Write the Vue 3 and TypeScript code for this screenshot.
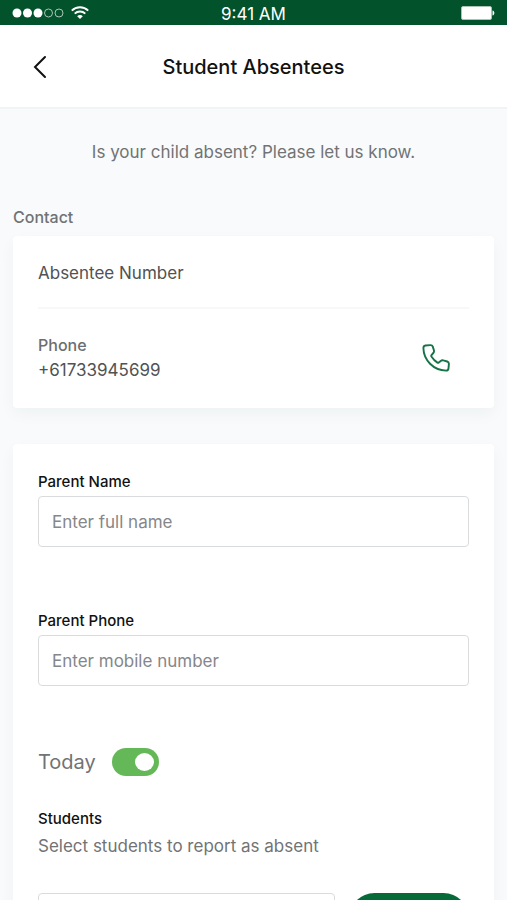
<script setup lang="ts">
import { ref } from 'vue'

const parentName = ref('')
const parentPhone = ref('')
const student = ref('')
const today = ref(true)
const signal: boolean[] = [true, true, true, false, false]
</script>

<template>
  <div class="screen">
    <div class="status">
      <div class="status-left">
        <svg class="signal" viewBox="0 0 52 10" aria-hidden="true">
          <circle
            v-for="(on, i) in signal"
            :key="i"
            :cx="5 + i * 10.5"
            cy="5"
            :r="on ? 4.5 : 4"
            :fill="on ? '#fff' : 'none'"
            :stroke="on ? 'none' : '#a9c4b4'"
          />
        </svg>
        <svg class="wifi" viewBox="0 0 18 13" fill="none" stroke="#fff" stroke-width="2" aria-hidden="true">
          <path d="M0.8 4.6C5.4 0.1 12.6 0.1 17.2 4.6" />
          <path d="M3.7 7.6C6.7 4.7 11.3 4.7 14.3 7.6" />
          <path d="M9 13L6.2 10.2C7.8 8.7 10.2 8.7 11.8 10.2Z" fill="#fff" stroke="none" />
        </svg>
      </div>
      <time class="clock">9:41 AM</time>
      <div class="status-right">
        <svg class="battery" viewBox="0 0 34 14" aria-hidden="true">
          <rect x="0.5" y="0.5" width="30" height="13" rx="1.5" fill="#fff" stroke="#a9c4b4" />
          <path d="M31.5 4.5C34 5 34 9 31.5 9.5Z" fill="#fff" />
        </svg>
      </div>
    </div>

    <header class="header">
      <button class="back" type="button" aria-label="Back">
        <svg viewBox="0 0 14 24" fill="none" stroke="#111" stroke-width="2" stroke-linecap="round" aria-hidden="true">
          <path d="M12 2L2 12L12 22" />
        </svg>
      </button>
      <h1>Student Absentees</h1>
    </header>

    <main class="content">
      <p class="intro">Is your child absent? Please let us know.</p>

      <h2 class="section">Contact</h2>
      <section class="card">
        <p class="contact-name">Absentee Number</p>
        <div class="contact-row">
          <div>
            <p class="contact-label">Phone</p>
            <p class="contact-value">+61733945699</p>
          </div>
          <a class="call" href="tel:+61733945699" aria-label="Call +61733945699">
            <svg viewBox="0 0 28 28" fill="none" stroke="#157347" stroke-width="1.9" stroke-linejoin="round" aria-hidden="true">
              <path d="M3.4 1.5L8.4 1.1C9.6 1 10.4 1.6 10.8 2.6L11.9 6.2C12.2 7.3 12 8.2 11.3 9L9.5 11.1C9.1 11.6 9.1 12 9.4 12.5C11 15 13 17 15.4 18.6C15.9 18.9 16.4 18.9 16.8 18.5L18.7 16.9C19.5 16.3 20.5 16.1 21.4 16.4L25.2 17.5C26.3 17.9 26.9 18.7 26.9 19.8L26.5 24.3C26.4 25.7 25.4 26.6 24 26.6C11.4 26.2 1.6 16.2 1.4 4.1C1.4 2.8 2.2 1.7 3.4 1.5Z" />
            </svg>
          </a>
        </div>
      </section>

      <form class="card form" @submit.prevent>
        <div class="field">
          <label for="parent-name">Parent Name</label>
          <input id="parent-name" v-model="parentName" type="text" placeholder="Enter full name" />
        </div>
        <div class="field">
          <label for="parent-phone">Parent Phone</label>
          <input id="parent-phone" v-model="parentPhone" type="tel" placeholder="Enter mobile number" />
        </div>
        <div class="today">
          <label for="today">Today</label>
          <input id="today" v-model="today" class="switch" type="checkbox" role="switch" />
        </div>
        <div class="students">
          <label for="student">Students</label>
          <p>Select students to report as absent</p>
          <div class="add-row">
            <input id="student" v-model="student" type="text" />
            <button class="add" type="button" aria-label="Add student"></button>
          </div>
        </div>
      </form>
    </main>
  </div>
</template>

<style>
body {
  margin: 0;
}
</style>

<style scoped>
.screen {
  display: flex;
  flex-direction: column;
  height: 100vh;
  background: #f8fafb;
  color: #111;
  font-family: Inter, "Liberation Sans", sans-serif;
}
.screen * {
  box-sizing: border-box;
}
h1, h2, p {
  margin: 0;
}
.status {
  flex: none;
  display: grid;
  grid-template-columns: 1fr auto 1fr;
  align-items: center;
  height: 25px;
  padding: 0 12px;
  background: #02522b;
  color: #fff;
}
.status-left {
  display: flex;
  align-items: center;
  gap: 7px;
}
.status svg {
  display: block;
}
.signal {
  width: 52px;
  height: 10px;
}
.wifi {
  width: 18px;
  height: 13px;
}
.clock {
  padding-top: 3px;
  font-size: 17px;
  line-height: 22px;
}
.status-right {
  display: flex;
  justify-content: flex-end;
}
.battery {
  width: 34px;
  height: 14px;
}
.header {
  flex: none;
  display: grid;
  grid-template-columns: 56px 1fr 56px;
  align-items: center;
  height: 84px;
  padding: 2px 12px 0;
  background: #fff;
  border-bottom: 2px solid #f1f4f5;
}
.back {
  display: flex;
  justify-content: center;
  padding: 8px 0;
  border: 0;
  background: none;
}
.back svg {
  width: 14px;
  height: 24px;
}
h1 {
  font-size: 20px;
  font-weight: 500;
  line-height: 28px;
  text-align: center;
}
.content {
  flex: 1;
  min-height: 0;
  padding: 31px 13px;
  overflow-y: auto;
  scrollbar-width: none;
}
.intro {
  color: #717375;
  font-size: 17px;
  line-height: 25px;
  text-align: center;
}
.section {
  margin: 40px 0 7px;
  color: #707274;
  font-size: 16px;
  font-weight: 500;
  line-height: 24px;
}
.card {
  padding: 0 25px;
  border-radius: 4px;
  background: #fff;
  box-shadow: 0 6px 16px rgba(30, 60, 50, 0.04);
}
.contact-name {
  padding: 25px 0 22px;
  border-bottom: 2px solid #f7f8f9;
  color: #505254;
  font-size: 17px;
  line-height: 24px;
}
.contact-row {
  display: flex;
  align-items: center;
  justify-content: space-between;
  padding: 24px 19px 25px 0;
}
.contact-label {
  color: #6c6e70;
  font-size: 16px;
  font-weight: 500;
  line-height: 25px;
}
.contact-value {
  color: #505254;
  font-size: 17px;
  line-height: 25px;
}
.call svg {
  display: block;
  width: 28px;
  height: 28px;
}
.form {
  margin-top: 36px;
  padding-top: 28px;
  padding-bottom: 28px;
}
.field {
  display: flex;
  flex-direction: column;
  gap: 4px;
  margin-bottom: 64px;
}
.field label,
.students label {
  display: block;
  font-size: 15px;
  font-weight: 500;
  line-height: 20px;
}
input[type="text"],
input[type="tel"] {
  width: 100%;
  min-width: 0;
  height: 51px;
  padding: 0 13px;
  border: 1px solid #d9dbdd;
  border-radius: 4px;
  background: #fff;
  color: #505254;
  font: inherit;
  font-size: 17px;
}
input::placeholder {
  color: #85878a;
  opacity: 1;
}
.today {
  display: flex;
  align-items: center;
  gap: 16px;
  margin-top: -2px;
  margin-bottom: 33px;
}
.today label {
  color: #717375;
  font-size: 20px;
  line-height: 28px;
}
.switch {
  appearance: none;
  width: 47px;
  height: 28px;
  margin: 0;
  padding: 5px;
  border-radius: 14px;
  background: #b9bdc0;
}
.switch::before {
  content: "";
  display: block;
  width: 19px;
  height: 18px;
  border-radius: 50%;
  background: #fff;
}
.switch:checked {
  background: #65b857;
}
.switch:checked::before {
  margin-left: auto;
}
.students p {
  margin: 5px 0 35px;
  color: #717375;
  font-size: 17px;
  line-height: 24px;
}
.add-row {
  display: flex;
  gap: 14px;
}
.add {
  flex: none;
  width: 120px;
  height: 51px;
  border: 0;
  border-radius: 26px;
  background: #066b38;
}
</style>
